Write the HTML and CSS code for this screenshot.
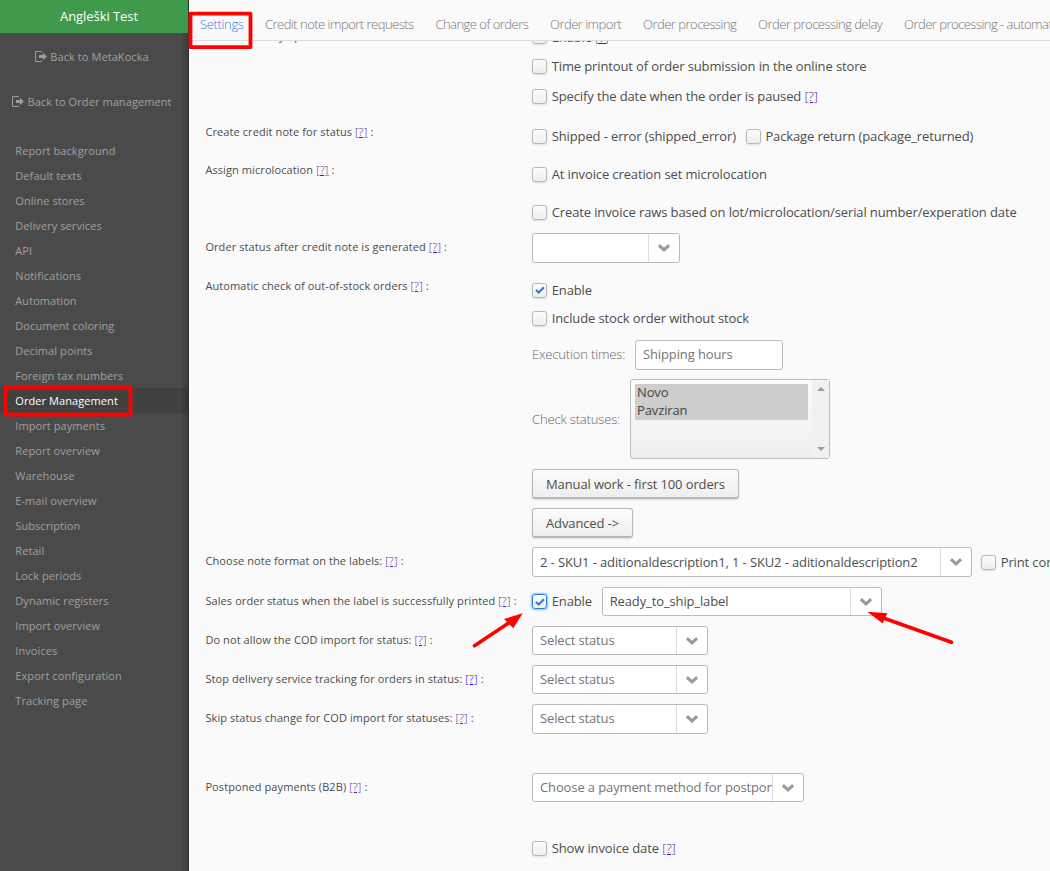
FILE: index.html
```html
<!DOCTYPE html>
<html lang="en">
<head>
<meta charset="utf-8">
<title>Order Management settings</title>
<link rel="stylesheet" href="styles.css">
</head>
<body>
<svg class="defs" width="0" height="0">
  <symbol id="chevron" viewBox="0 0 12 8"><path d="M.9 1.200 L6 5.900 L11.100 1.200" fill="none" stroke="#9a9a9a" stroke-width="3" stroke-linecap="butt"/></symbol>
  <symbol id="check" viewBox="0 0 10 8"><path d="M1 4 L3.700 6.500 L9 1.200" fill="none" stroke="#2f7de1" stroke-width="2.200"/></symbol>
  <symbol id="exit" viewBox="0 0 12 11"><path d="M6.500 1.500V.5H.5v10h6V9.500" fill="none" stroke="#9c9c9c"/><path d="M4 4h4V1.700L11.800 5.500 8 9.200V7H4z" fill="#9c9c9c"/></symbol>
</svg>
<div class="app">
  <aside class="sidebar">
    <div class="company">Angleški Test</div>
    <a class="back back-first"><svg class="exit"><use href="#exit"/></svg>Back to MetaKocka</a>
    <a class="back"><svg class="exit"><use href="#exit"/></svg>Back to Order management</a>
    <nav class="menu">
      <a>Report background</a><a>Default texts</a><a>Online stores</a><a>Delivery services</a><a>API</a><a>Notifications</a><a>Automation</a><a>Document coloring</a><a>Decimal points</a><a>Foreign tax numbers</a><a class="active">Order Management</a><a>Import payments</a><a>Report overview</a><a>Warehouse</a><a>E-mail overview</a><a>Subscription</a><a>Retail</a><a>Lock periods</a><a>Dynamic registers</a><a>Import overview</a><a>Invoices</a><a>Export configuration</a><a>Tracking page</a>
    </nav>
  </aside>
  <main class="main">
    <div class="tabs">
      <a class="tab selected">Settings</a><a class="tab">Credit note import requests</a><a class="tab">Change of orders</a><a class="tab">Order import</a><a class="tab">Order processing</a><a class="tab">Order processing delay</a><a class="tab">Order processing - automatic</a>
    </div>
    <div class="viewport"><div class="form">
      <div class="row r-delay">
        <div class="label">Set order delay up :</div>
        <div class="fields">
          <div class="line l29"><i class="box"></i>Enable <a class="help">[?]</a></div>
          <div class="line"><i class="box"></i>Time printout of order submission in the online store</div>
          <div class="line"><i class="box"></i>Specify the date when the order is paused <a class="help">[?]</a></div>
        </div>
      </div>
      <div class="row r-credit">
        <div class="label">Create credit note for status <a class="help">[?]</a> :</div>
        <div class="fields"><div class="line l38"><i class="box"></i><span class="w-ship">Shipped - error (shipped_error)</span><i class="box"></i>Package return (package_returned)</div></div>
      </div>
      <div class="row">
        <div class="label">Assign microlocation <a class="help">[?]</a> :</div>
        <div class="fields">
          <div class="line l38"><i class="box"></i>At invoice creation set microlocation</div>
          <div class="line l38"><i class="box"></i>Create invoice raws based on lot/microlocation/serial number/experation date</div>
        </div>
      </div>
      <div class="row r-status">
        <div class="label">Order status after credit note is generated <a class="help">[?]</a> :</div>
        <div class="fields"><div class="line l34"><div class="select s-small tall"><span></span><b><svg><use href="#chevron"/></svg></b></div></div></div>
      </div>
      <div class="row r-auto">
        <div class="label">Automatic check of out-of-stock orders <a class="help">[?]</a> :</div>
        <div class="fields">
          <div class="line l28"><i class="box"><svg><use href="#check"/></svg></i>Enable</div>
          <div class="line l28"><i class="box"></i>Include stock order without stock</div>
          <div class="line l45"><span class="hint w-exec">Execution times:</span><div class="input">Shipping hours</div></div>
          <div class="line l84"><span class="hint w-check">Check statuses:</span>
            <div class="list"><div class="options"><div>Novo</div><div>Pavziran</div></div><div class="scroll"><u class="up"></u><u class="down"></u></div></div>
          </div>
          <div class="line l-button"><div class="button">Manual work - first 100 orders</div></div>
          <div class="line l-button"><div class="button">Advanced -&gt;</div></div>
        </div>
      </div>
      <div class="row r-note">
        <div class="label">Choose note format on the labels: <a class="help">[?]</a> :</div>
        <div class="fields"><div class="line l38"><div class="select s-note tall"><span>2 - SKU1 - aditionaldescription1, 1 - SKU2 - aditionaldescription2</span><b><svg><use href="#chevron"/></svg></b></div><i class="box"></i>Print comments</div></div>
      </div>
      <div class="row r-sales">
        <div class="label">Sales order status when the label is successfully printed <a class="help">[?]</a> :</div>
        <div class="fields"><div class="line l39"><i class="box focus"><svg><use href="#check"/></svg></i><span class="w-enable">Enable</span><div class="select s-ready"><span>Ready_to_ship_label</span><b><svg><use href="#chevron"/></svg></b></div></div></div>
      </div>
      <div class="row r-cod">
        <div class="label">Do not allow the COD import for status: <a class="help">[?]</a> :</div>
        <div class="fields"><div class="line l39"><div class="select s-status muted"><span>Select status</span><b><svg><use href="#chevron"/></svg></b></div></div></div>
      </div>
      <div class="row r-cod">
        <div class="label">Stop delivery service tracking for orders in status: <a class="help fresh">[?]</a> :</div>
        <div class="fields"><div class="line l39"><div class="select s-status muted"><span>Select status</span><b><svg><use href="#chevron"/></svg></b></div></div></div>
      </div>
      <div class="row r-cod">
        <div class="label">Skip status change for COD import for statuses: <a class="help">[?]</a> :</div>
        <div class="fields"><div class="line l39"><div class="select s-status muted tall"><span>Select status</span><b><svg><use href="#chevron"/></svg></b></div></div></div>
      </div>
      <div class="row r-post">
        <div class="label">Postponed payments (B2B) <a class="help">[?]</a> :</div>
        <div class="fields"><div class="line l39"><div class="select s-post muted"><span>Choose a payment method for postponed payments</span><b><svg><use href="#chevron"/></svg></b></div></div></div>
      </div>
      <div class="row r-date">
        <div class="label"></div>
        <div class="fields"><div class="line l38"><i class="box"></i>Show invoice date <a class="help">[?]</a></div></div>
      </div>
    </div></div>
  </main>
</div>
<svg class="marks" viewBox="0 0 1050 871">
  <g fill="none" stroke="#f00" stroke-linejoin="round" stroke-linecap="round">
    <rect x="190.500" y="13.700" width="60" height="33.500" stroke-width="3.800"/>
    <rect x="5.500" y="387.500" width="125" height="27" stroke-width="3.800"/>
    <path d="M474.500 645.700 L511 621.500" stroke-width="3.600"/>
    <path d="M951.500 642.300 L882 617.500" stroke-width="3.600"/>
  </g>
  <path fill="#f00" d="M522.700 613.300 L504 619 L508 623 L513.300 628.300Z M867.300 611.700 L887.500 613.300 L885 618 L882.700 623.500Z"/>
</svg>
</body>
</html>
```
FILE: styles.css
```css
* { box-sizing: border-box; }
body { margin: 0; background: #fafafa; font: 13px/18px "Open Sans", sans-serif; letter-spacing: -.12px; color: #4d4d4d; overflow: hidden; }
.defs { position: absolute; }
.app { display: flex; width: 1050px; height: 871px; overflow: hidden; }

.sidebar { flex: none; width: 189px; border-right: 1px solid #303030; background: linear-gradient(to right, transparent 181px, rgba(0,0,0,.2) 188px), #4a4a4a; color: #a0a0a0; font-size: 11px; letter-spacing: .08px; }
.company { height: 33px; padding-left: 10px; background: #3f9a4b; color: #fff; font-size: 13px; letter-spacing: -.06px; line-height: 33px; text-align: center; }
.back { display: flex; align-items: center; justify-content: center; height: 45px; padding-right: 4px; gap: 3px; }
.back-first { margin-top: 1px; }
.exit { width: 12px; height: 11px; }
.menu { display: flex; flex-direction: column; padding-top: 14px; }
.menu a { height: 25px; padding-left: 15.300px; line-height: 26px; }
.menu .active { background: rgba(0,0,0,.12); color: #fff; }

.main { flex: 1; min-width: 0; display: flex; flex-direction: column; }
.tabs { flex: none; display: flex; height: 41px; padding: 9px 0 0 8px; border-bottom: 1px solid #ddd; overflow: hidden; white-space: nowrap; }
.tab { flex: none; height: 32px; padding: 6px 0 0 3px; margin-right: 18.800px; font-weight: 300; color: #777; font-size: 13px; letter-spacing: -.52px; }
.tab.selected { width: 49px; margin-right: 16px; border-bottom: 1px solid #3b82e6; color: #3b82e6; letter-spacing: -.35px; }

.viewport { flex: 1; overflow: hidden; }
.form { margin-top: -19px; padding-left: 16px; }
.row { display: flex; white-space: nowrap; }
.label { flex: none; width: 327px; padding: 6px 0 0 .4px; font-size: 11px; letter-spacing: .09px; }
.r-delay .label { padding-top: 5px; }
.line { display: flex; align-items: center; height: 30px; white-space: pre; }
.l28 { height: 28px; } .l29 { height: 29px; } .l34 { height: 34px; } .l38 { height: 38px; } .l39 { height: 39px; } .l45 { height: 45px; } .l84 { height: 84px; }
.l-button { height: 39px; padding-top: 7px; }
.r-credit { margin-top: 6px; }
.r-status .label { padding-top: 7px; }
.r-auto { margin-top: 11px; } .r-auto .label { padding-top: 1px; }
.r-note { margin-top: 4px; } .r-note .label { padding-top: 9px; }
.r-sales .label, .r-cod .label { padding-top: 10px; }
.r-sales { margin-top: 1px; }
.r-post { margin-top: 30px; } .r-post .label { padding-top: 10px; }
.r-date { margin-top: 22px; }
.help { color: #551a8b; font-weight: 300; text-decoration: underline; }
.label .help { letter-spacing: .25px; }
.help.fresh { color: #00e; }
.hint { font-weight: 300; color: #666; letter-spacing: -.16px; padding-bottom: 1px; }
.w-ship { width: 194px; } .w-enable { width: 50px; padding-bottom: 1px; } .w-exec { width: 103px; } .w-check { width: 98px; }

.box { flex: none; display: flex; align-items: center; justify-content: center; width: 15px; height: 15px; margin-right: 4.700px; border: 1px solid #b8b8b8; border-radius: 3px; background: linear-gradient(#fcfcfc, #eee); box-shadow: 0 1px 2px rgba(0,0,0,.12); }
.box svg { width: 10px; height: 8px; }
.box.focus { border-color: #2f7de1; box-shadow: 0 0 2px 1px #8bbcf5; }
.select { flex: none; display: flex; height: 29px; border: 1px solid #bbb; border-radius: 3px; background: #fff; }
.select.tall { height: 30px; }
.select span { flex: 1; min-width: 0; padding-top: 4px; margin-left: 7px; overflow: hidden; }
.select.s-note span { padding-top: 5px; }
.select b { flex: none; display: flex; align-items: center; justify-content: center; width: 31px; border-left: 1px solid #ddd; }
.select svg { width: 12px; height: 8px; }
.muted { color: #757575; }
.s-small { width: 148px; } .s-note { width: 440px; margin-right: 9px; } .s-ready { width: 280px; } .s-status { width: 176px; } .s-post { width: 272px; }
.input { width: 148px; height: 30px; padding: 4px 7px; border: 1px solid #bbb; border-radius: 3px; background: #fff; color: #757575; }
.list { display: flex; width: 200px; height: 80px; border: 1px solid #bbb; border-radius: 3px; background: linear-gradient(#fcfcfc, #eee); }
.options { flex: 1; padding: 4px; color: #444; }
.options div { padding-left: 2px; background: #cdcdcd; line-height: 16px; height: 18px; }
.scroll { display: flex; flex-direction: column; align-items: center; justify-content: space-between; width: 17px; padding: 7px 0; background: #f1f1f1; }
.up, .down { border: 4px solid transparent; }
.up { border-top: 0; border-bottom-color: #9b9b9b; }
.down { border-bottom: 0; border-top-color: #9b9b9b; }
.button { height: 30px; padding: 5px 13px; border: 1px solid #b8b8b8; border-bottom-width: 2px; border-radius: 3px; background: linear-gradient(#fcfcfc, #eee); box-shadow: 0 1px 2px rgba(0,0,0,.12); }
.marks { position: absolute; left: 0; top: 0; width: 1050px; height: 871px; pointer-events: none; }
```
